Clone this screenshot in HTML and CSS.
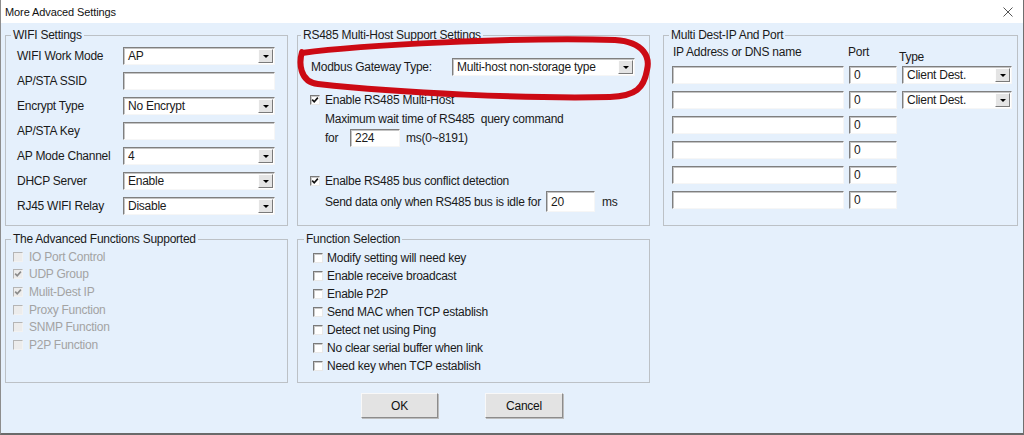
FILE: index.html
```html
<!DOCTYPE html>
<html lang="en">

<head>
    <meta charset="UTF-8">
    <title>More Advaced Settings</title>
    <link rel="stylesheet" href="styles.css">
</head>

<body>
    <div class="window">
        <div class="titlebar">
            <span>More Advaced Settings</span>
            <svg class="close" width="10" height="10" viewBox="0 0 10 10">
                <path d="M0.5 0.5 L9.5 9.5 M9.5 0.5 L0.5 9.5" />
            </svg>
        </div>

        <div class="client">
            <!-- WIFI -->
            <fieldset class="group wifi">
                <legend>WIFI Settings</legend>
                <div class="fields">
                    <label>WIFI Work Mode</label>
                    <div class="combo"><span>AP</span><i class="drop"></i></div>
                    <label>AP/STA SSID</label>
                    <div class="edit"></div>
                    <label>Encrypt Type</label>
                    <div class="combo"><span>No Encrypt</span><i class="drop"></i></div>
                    <label>AP/STA Key</label>
                    <div class="edit"></div>
                    <label>AP Mode Channel</label>
                    <div class="combo"><span>4</span><i class="drop"></i></div>
                    <label>DHCP Server</label>
                    <div class="combo"><span>Enable</span><i class="drop"></i></div>
                    <label>RJ45 WIFI Relay</label>
                    <div class="combo"><span>Disable</span><i class="drop"></i></div>
                </div>
            </fieldset>

            <!-- RS485 -->
            <fieldset class="group rs485">
                <legend>RS485 Multi-Host Support Settings</legend>
                <div class="body">
                    <div class="modbus-row">
                        <label>Modbus Gateway Type:</label>
                        <div class="combo"><span>Multi-host non-storage type</span><i class="drop"></i></div>
                    </div>
                    <div class="check-row">
                        <span class="cb"><svg viewBox="0 0 8 8"><path d="M1.2 3.6 L3.2 5.8 L6.9 1.6" /></svg></span>
                        Enable RS485 Multi-Host
                    </div>
                    <div class="note">Maximum wait time of RS485&nbsp; query command</div>
                    <div class="for-row">
                        <span class="for-label">for</span>
                        <div class="edit num">224</div>
                        <span>ms(0~8191)</span>
                    </div>
                    <div class="check-row second">
                        <span class="cb"><svg viewBox="0 0 8 8"><path d="M1.2 3.6 L3.2 5.8 L6.9 1.6" /></svg></span>
                        Enalbe RS485 bus conflict detection
                    </div>
                    <div class="send-row">
                        <span class="send-label">Send data only when RS485 bus is idle for</span>
                        <div class="edit idle">20</div>
                        <span>ms</span>
                    </div>
                </div>
            </fieldset>

            <!-- Multi dest -->
            <fieldset class="group multi">
                <legend>Multi Dest-IP And Port</legend>
                <div class="dest-grid">
                    <span class="head ip">IP Address or DNS name</span>
                    <span class="head port">Port</span>
                    <span class="head type">Type</span>

                    <div class="edit ip"></div>
                    <div class="edit port">0</div>
                    <div class="combo type"><span>Client Dest.</span><i class="drop"></i></div>

                    <div class="edit ip"></div>
                    <div class="edit port">0</div>
                    <div class="combo type"><span>Client Dest.</span><i class="drop"></i></div>

                    <div class="edit ip"></div>
                    <div class="edit port">0</div>
                    <div class="edit ip"></div>
                    <div class="edit port">0</div>
                    <div class="edit ip"></div>
                    <div class="edit port">0</div>
                    <div class="edit ip"></div>
                    <div class="edit port">0</div>
                </div>
            </fieldset>

            <!-- Advanced functions -->
            <fieldset class="group advanced">
                <legend>The Advanced Functions Supported</legend>
                <div class="checks">
                    <div class="check-item disabled"><span class="cb"></span>IO Port Control</div>
                    <div class="check-item disabled"><span class="cb"><svg viewBox="0 0 8 8"><path d="M1.2 3.6 L3.2 5.8 L6.9 1.6" /></svg></span>UDP Group</div>
                    <div class="check-item disabled"><span class="cb"><svg viewBox="0 0 8 8"><path d="M1.2 3.6 L3.2 5.8 L6.9 1.6" /></svg></span>Mulit-Dest IP</div>
                    <div class="check-item disabled"><span class="cb"></span>Proxy Function</div>
                    <div class="check-item disabled"><span class="cb"></span>SNMP Function</div>
                    <div class="check-item disabled"><span class="cb"></span>P2P Function</div>
                </div>
            </fieldset>

            <!-- Function selection -->
            <fieldset class="group funcs">
                <legend>Function Selection</legend>
                <div class="checks">
                    <div class="check-item"><span class="cb"></span>Modify setting will need key</div>
                    <div class="check-item"><span class="cb"></span>Enable receive broadcast</div>
                    <div class="check-item"><span class="cb"></span>Enable P2P</div>
                    <div class="check-item"><span class="cb"></span>Send MAC when TCP establish</div>
                    <div class="check-item"><span class="cb"></span>Detect net using Ping</div>
                    <div class="check-item"><span class="cb"></span>No clear serial buffer when link</div>
                    <div class="check-item"><span class="cb"></span>Need key when TCP establish</div>
                </div>
            </fieldset>

            <div class="buttons">
                <button class="ok">OK</button>
                <button class="cancel">Cancel</button>
            </div>
        </div>
    </div>

    <!-- hand drawn red mark over the modbus row -->
    <svg class="mark" width="1024" height="435" viewBox="0 0 1024 435">
        <path d="M302 53 C360 45, 520 37, 615 40 C645 42, 650 58, 647 70 C644 88, 636 96, 610 97 C530 99, 400 93, 318 84 C299 82, 299 62, 302 52" />
    </svg>
</body>

</html>
```

FILE: styles.css
```css
* {
    box-sizing: border-box;
}

body {
    position: relative;
    margin: 0;
    overflow: hidden;
    font-family: "Liberation Sans", Arial, sans-serif;
    font-size: 12px;
    letter-spacing: -0.25px;
    color: #1a1a1a;
}

.window {
    width: 1024px;
    height: 435px;
    background-color: #e5f0fc;
    border-left: 1px solid #8d8d8d;
    border-right: 1px solid #6f6f6f;
    border-bottom: 2px solid #6a6a6a;
}

.titlebar {
    height: 23px;
    display: flex;
    align-items: center;
    justify-content: space-between;
    padding: 0 10px 0 4px;
    background-color: white;
    font-size: 11px;
    letter-spacing: -0.1px;
    color: #111;
}

.close path {
    stroke: #555;
    stroke-width: 1;
    fill: none;
}

.client {
    display: grid;
    grid-template-columns: 283px 353px 359px;
    grid-template-rows: 198px 151px;
    column-gap: 9px;
    row-gap: 6px;
    padding: 5px 0 0 4px;
}

/* group boxes */

.group {
    margin: 0;
    padding: 0;
    min-width: 0;
    border: 1px solid #bcc1c6;
}

.group legend {
    margin-left: 5px;
    padding: 0 2px;
    line-height: 14px;
}

.rs485 legend {
    margin-left: 3px;
}

.funcs legend {
    margin-left: 6px;
}

.multi {
    margin-left: 4px;
}

/* controls */

.combo,
.edit {
    display: flex;
    align-items: center;
    background-color: white;
    border: 1px solid;
    border-color: #7f7f7f #f6f6f6 #f6f6f6 #7f7f7f;
    box-shadow: inset 1px 1px 0 #c4c4c4;
}

.combo span,
.edit {
    padding-left: 4px;
    white-space: nowrap;
}

.combo {
    align-items: stretch;
}

.combo span {
    flex: 1;
    display: flex;
    align-items: center;
}

.drop {
    width: 15px;
    margin: 1px;
    display: flex;
    align-items: center;
    justify-content: center;
    background-color: #e4e4e4;
    border: 1px solid;
    border-color: #fdfdfd #7a7a7a #7a7a7a #fdfdfd;
}

.drop::after {
    content: "";
    border-left: 3px solid transparent;
    border-right: 3px solid transparent;
    border-top: 3px solid #000;
}

.cb {
    width: 10px;
    height: 10px;
    flex: none;
    display: flex;
    background-color: white;
    border: 1px solid;
    border-color: #7a7a7a #e9e9e9 #e9e9e9 #7a7a7a;
    box-shadow: inset 1px 1px 0 #c9c9c9;
}

.cb svg {
    width: 8px;
    height: 8px;
}

.cb path {
    fill: none;
    stroke: #111;
    stroke-width: 1.6;
}

/* wifi */

.wifi .fields {
    display: grid;
    grid-template-columns: 106px 152px;
    grid-auto-rows: 18px;
    row-gap: 7px;
    padding: 5px 0 0 11px;
}

.wifi label {
    align-self: center;
    line-height: 14px;
}

/* rs485 */

.rs485 .body {
    padding: 16px 0 0 13px;
}

.modbus-row {
    display: flex;
    align-items: center;
    height: 18px;
}

.modbus-row label {
    width: 141px;
}

.modbus-row .combo {
    width: 183px;
    height: 18px;
}

.check-row {
    display: flex;
    align-items: center;
    gap: 5px;
    height: 14px;
    margin: 17px 0 0 -1px;
}

.check-row.second {
    margin-top: 27px;
}

.note {
    margin: 5px 0 0 14px;
    line-height: 14px;
}

.for-row,
.send-row {
    display: flex;
    align-items: center;
    margin: 3px 0 0 14px;
}

.for-label {
    width: 25px;
}

.edit.num {
    width: 50px;
    height: 18px;
    margin-right: 6px;
}

.send-label {
    width: 221px;
    white-space: nowrap;
}

.edit.idle {
    width: 49px;
    height: 21px;
    margin-right: 7px;
}

/* multi dest */

.dest-grid {
    display: grid;
    grid-template-columns: 172px 48px 110px;
    grid-template-rows: 17px;
    grid-auto-rows: 18px;
    column-gap: 5px;
    row-gap: 7px;
    padding-left: 8px;
}

.dest-grid .ip {
    grid-column: 1;
}

.dest-grid .port {
    grid-column: 2;
}

.dest-grid .type {
    grid-column: 3;
}

.head {
    align-self: end;
    line-height: 14px;
}

.head.ip {
    padding-left: 1px;
}

.head.port {
    margin-left: -1px;
}

.head.type {
    margin: 0 0 -5px -3px;
}

/* check lists */

.checks {
    padding: 2px 0 0 7px;
}

.check-item {
    display: flex;
    align-items: center;
    gap: 6px;
    height: 17.6px;
}

.funcs .checks {
    padding: 3px 0 0 15px;
}

.funcs .check-item {
    height: 18px;
    gap: 4px;
}

.check-item.disabled {
    color: #a3a3a3;
}

.disabled .cb {
    background-color: #ececec;
    border-color: #b5b5b5 #f2f2f2 #f2f2f2 #b5b5b5;
    box-shadow: none;
}

.disabled .cb path {
    stroke: #8a8a8a;
}

/* buttons */

.buttons {
    grid-column: 2;
    display: flex;
    gap: 47px;
    margin-top: 4px;
    padding-left: 64px;
}

button {
    width: 77px;
    height: 25px;
    padding: 0;
    font-family: inherit;
    font-size: 12px;
    letter-spacing: -0.25px;
    color: #111;
    background-color: #e3e3e3;
    border: 1px solid;
    border-color: #f8f8f8 #8c8c8c #8c8c8c #f8f8f8;
    box-shadow: 1px 1px 0 #bdbdbd;
}

.cancel {
    width: 78px;
}

/* red annotation */

.mark {
    position: absolute;
    top: 0;
    left: 0;
    pointer-events: none;
}

.mark path {
    fill: none;
    stroke: #cc0a14;
    stroke-width: 6;
    stroke-linecap: round;
    stroke-linejoin: round;
}
```
